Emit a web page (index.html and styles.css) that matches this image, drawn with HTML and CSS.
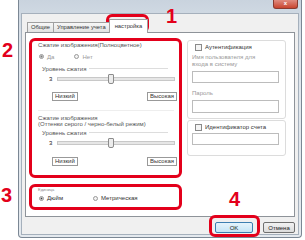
FILE: index.html
```html
<!DOCTYPE html>
<html lang="ru">
<head>
<meta charset="UTF-8" />
<meta name="viewport" content="width=device-width, initial-scale=1" />
<title>Настройка</title>
<link rel="stylesheet" href="styles.css">
</head>
<body>

<div class="window">
  <div class="titlebar"><span class="close">x</span></div>
  <div class="client">
    <div class="tabs">
      <div class="tab">Общие</div>
      <div class="tab">Управление учета</div>
      <div class="tab active">настройка</div>
    </div>

    <div class="panel">
      <div class="col-left">
        <div class="mark-box compress">
          <div class="section">
            <div class="title">Сжатие изображения(Полноцветное)</div>
            <div class="radios">
              <label class="opt dim"><span class="radio on"></span>Да</label>
              <label class="opt dim"><span class="radio"></span>Нет</label>
            </div>
            <div class="level"><span>Уровень сжатия</span></div>
            <div class="slider-row">
              <span class="val">3</span>
              <div class="track"><span class="thumb"></span></div>
            </div>
            <div class="scale">
              <span class="scale-box">Низкий</span>
              <span class="scale-box">Высокая</span>
            </div>
          </div>
          <div class="section second">
            <div class="title">Сжатие изображения<br>(Оттенки серого / черно-белый режим)</div>
            <div class="level"><span>Уровень сжатия</span></div>
            <div class="slider-row">
              <span class="val">3</span>
              <div class="track"><span class="thumb"></span></div>
            </div>
            <div class="scale">
              <span class="scale-box">Низкий</span>
              <span class="scale-box">Высокая</span>
            </div>
          </div>
        </div>

        <div class="mark-box units">
          <div class="units-label">Единица</div>
          <div class="radios">
            <label class="opt"><span class="radio on"></span>Дюйм</label>
            <label class="opt"><span class="radio"></span>Метрическая</label>
          </div>
        </div>
      </div>

      <div class="col-right">
        <div class="group auth">
          <label class="check"><span class="box"></span>Аутентификация</label>
          <div class="hint">Имя пользователя для<br>входа в систему</div>
          <div class="field"></div>
          <div class="hint pass">Пароль</div>
          <div class="field tall"></div>
        </div>
        <div class="group account">
          <label class="check"><span class="box"></span>Идентификатор счета</label>
          <div class="field"></div>
        </div>
      </div>
    </div>

    <div class="buttons">
      <button class="btn ok">OK</button>
      <button class="btn">Отмена</button>
    </div>
  </div>
</div>

<!-- annotations drawn over the screenshot -->
<div class="ring ring-tab"></div>
<div class="ring ring-ok"></div>
<span class="num n1">1</span>
<span class="num n2">2</span>
<span class="num n3">3</span>
<span class="num n4">4</span>

</body>
</html>
```

FILE: styles.css
```css
body {
  margin: 0;
  width: 305px;
  height: 240px;
  position: relative;
  overflow: hidden;
  background: #fff;
  font-family: 'Liberation Sans', Arial, sans-serif;
  font-size: 6px;
  color: #444;
}
.window {
  margin-left: 18px;
  width: 284px;
  height: 238px;
  box-sizing: border-box;
  background: linear-gradient(#c9d3de, #dfe6ed 20%, #e4e9ee);
  border: 1px solid #7b8794;
  border-top: none;
  border-radius: 0 0 4px 4px;
  display: flex;
  flex-direction: column;
}
.titlebar {
  height: 13px;
  display: flex;
  justify-content: flex-end;
}
.close {
  width: 23px;
  height: 8px;
  margin-right: 3px;
  background: linear-gradient(#e08c80, #c9452f);
  border: 1px solid #8a3b30;
  border-top: none;
  border-radius: 0 0 3px 3px;
  color: #fff;
  font-size: 6px;
  line-height: 7px;
  text-align: center;
  font-weight: 700;
}
.client {
  flex: 1;
  margin: 0 2px 2px;
  padding: 5px 3px 0;
  background: #f0f0f0;
  border: 1px solid #a5b0bc;
}
.tabs {
  display: flex;
  align-items: flex-end;
  height: 13px;
  margin-left: 2px;
  position: relative;
  z-index: 1;
}
.tab {
  height: 9px;
  line-height: 9px;
  padding: 0 3px;
  border: 1px solid #a0a0a0;
  border-bottom: none;
  margin-right: -1px;
  background: linear-gradient(#f7f7f7, #e2e2e2);
  color: #333;
  font-size: 5.8px;
}
.tab.active {
  height: 13px;
  line-height: 12px;
  padding: 0 5px;
  background: #fff;
  margin-bottom: -1px;
}
.panel {
  height: 185px;
  box-sizing: border-box;
  background: #fff;
  border: 1px solid #8e9399;
  padding: 5px 0 0 3px;
  display: flex;
  gap: 5px;
}
.col-left {
  width: 153px;
  display: flex;
  flex-direction: column;
  gap: 6px;
}
.mark-box {
  border: 3px solid #e3001b;
  border-radius: 6px;
  box-sizing: border-box;
}
.compress {
  height: 140px;
  padding: 0 5px 0 6px;
}
.title {
  line-height: 6.5px;
  color: #555;
  margin-top: 1px;
}
.radios {
  display: flex;
  gap: 20px;
  margin-top: 5px;
  padding-left: 1px;
}
.opt {
  display: flex;
  align-items: center;
  gap: 3px;
  color: #333;
}
.opt.dim { color: #999; }
.radio {
  width: 5px;
  height: 5px;
  border: 1px solid #999;
  border-radius: 50%;
  background: #f3f3f3;
  box-sizing: border-box;
  position: relative;
}
.radio.on::after {
  content: '';
  position: absolute;
  left: 1px; top: 1px;
  width: 1px; height: 1px;
  border-radius: 50%;
  background: #333;
  box-shadow: 0 0 0 0.5px #555;
}
.opt.dim .radio.on::after { background: #888; }
.level {
  display: flex;
  align-items: center;
  margin-top: 6px;
  padding-left: 4px;
  width: 126px;
  color: #555;
}
.level::after {
  content: '';
  flex: 1;
  height: 1px;
  background: #ddd;
  margin-left: 3px;
}
.slider-row {
  display: flex;
  align-items: center;
  height: 10px;
  margin-top: 2px;
  padding-left: 11px;
  width: 126px;
  gap: 5px;
}
.val { color: #222; }
.track {
  flex: 1;
  height: 2px;
  background: #e6e6e6;
  border: 1px solid #c8c8c8;
  position: relative;
}
.thumb {
  position: absolute;
  left: 50px;
  top: -4px;
  width: 4px;
  height: 8px;
  border: 1px solid #8c8c8c;
  border-radius: 1px 1px 2px 2px;
  background: #ececec;
}
.scale {
  display: flex;
  justify-content: space-between;
  margin-top: 8px;
  padding-left: 14px;
  width: 125px;
}
.scale-box {
  border: 1px solid #999;
  padding: 0 2px;
  line-height: 7px;
  color: #333;
}
.section.second {
  border-top: 1px solid #eee;
  margin-top: 9px;
  padding-top: 3px;
}
.second .level { margin-top: 2px; }
.second .scale { margin-top: 9px; }
.units {
  height: 26px;
  padding: 0 6px;
}
.units-label {
  font-size: 4px;
  line-height: 5px;
  color: #888;
}
.units .radios {
  margin-top: 3px;
  gap: 30px;
}
.col-right {
  width: 99px;
  padding-top: 2px;
  display: flex;
  flex-direction: column;
  gap: 1px;
}
.group {
  border: 1px solid #dcdcdc;
  border-radius: 3px;
  padding: 2px 5px 0 4px;
  box-sizing: border-box;
}
.auth { height: 79px; }
.account { height: 36px; }
.check {
  display: flex;
  align-items: center;
  gap: 3px;
  margin-left: 3px;
  color: #333;
  line-height: 7px;
  margin-top: 1px;
}
.box {
  width: 5px;
  height: 5px;
  border: 1px solid #8a8a8a;
  background: #f4f4f4;
}
.hint {
  color: #999;
  line-height: 7px;
  margin-top: 3px;
}
.hint.pass { margin-top: 7px; }
.field {
  height: 10px;
  border: 1px solid #bcbcbc;
  margin-top: 3px;
  margin-right: 1px;
}
.field.tall { height: 11px; margin-top: 3px; }
.account .field { margin-top: 2px; }
.buttons {
  display: flex;
  justify-content: flex-end;
  gap: 10px;
  margin-top: 5px;
}
.btn {
  font-family: inherit;
  font-size: 6px;
  height: 11px;
  padding: 0;
  border: 1px solid #707070;
  border-radius: 2px;
  background: linear-gradient(#f2f2f2, #dcdcdc);
  color: #222;
  width: 32px;
}
.btn.ok {
  width: 38px;
  border-color: #3c7fb1;
  background: linear-gradient(#e5f4fc, #c4e5f6);
}
.ring {
  position: absolute;
  border: 3px solid #e3001b;
  border-radius: 6px;
  box-sizing: border-box;
}
.ring-tab { left: 106px; top: 14px; width: 43px; height: 19px; }
.ring-ok { left: 209px; top: 215px; width: 51px; height: 22px; }
.num {
  position: absolute;
  color: #e3001b;
  font-weight: 700;
  font-size: 20px;
  line-height: 20px;
}
.n1 { left: 166px; top: 6px; }
.n2 { left: 2px; top: 40px; }
.n3 { left: 1px; top: 185px; }
.n4 { left: 229px; top: 189px; }
```
